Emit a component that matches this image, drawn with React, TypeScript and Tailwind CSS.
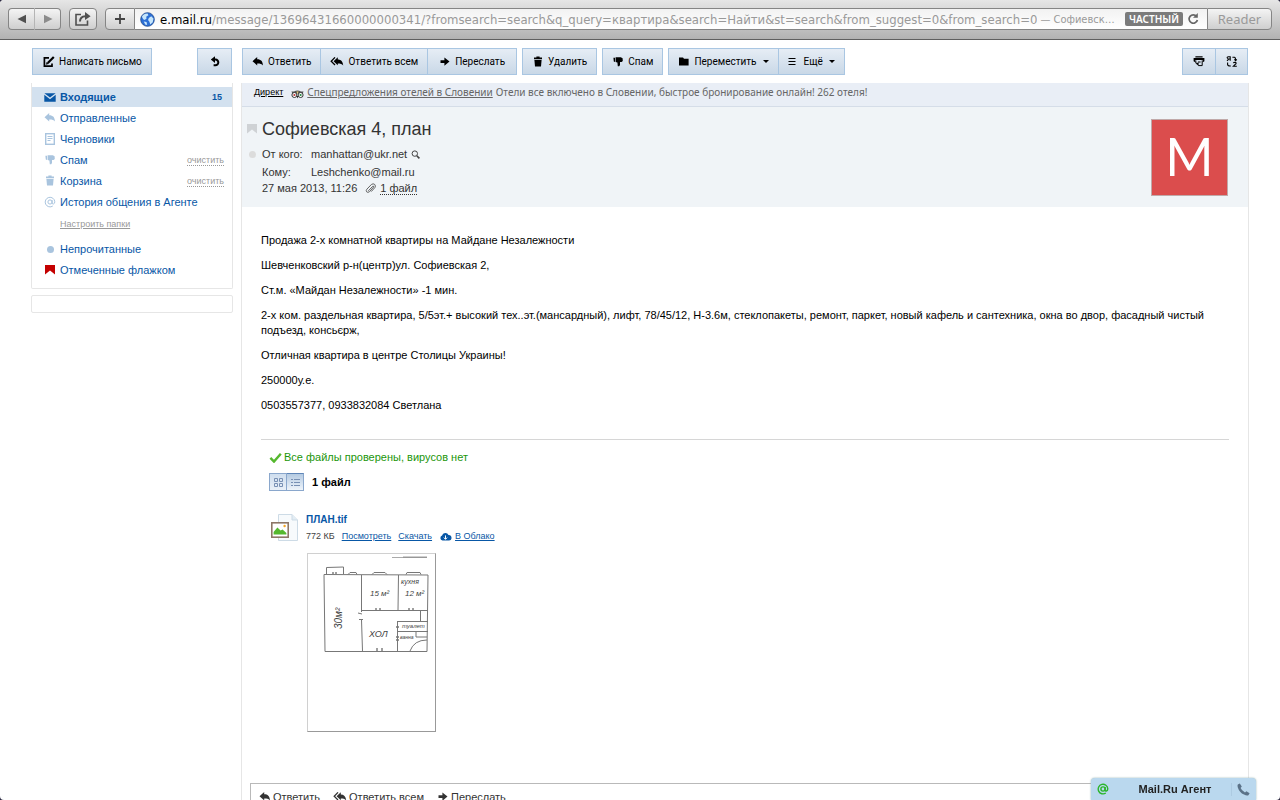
import { useState } from "react";
import type { ReactNode } from "react";
import clsx from "clsx";

type IconProps = { className?: string };

const ReplyIcon = ({ className }: IconProps) => (
  <svg viewBox="0 0 12 10" className={clsx("h-[10px] w-[12px] shrink-0 fill-current", className)}>
    <path d="M0.5 4.2 5.2 0V2.2C9 2.2 10.8 4.4 11 8.6 9.8 6.8 8.4 6.4 5.2 6.4V8.4Z" />
  </svg>
);

const ReplyAllIcon = ({ className }: IconProps) => (
  <svg viewBox="0 0 14 10" className={clsx("h-[10px] w-[14px] shrink-0 fill-current", className)}>
    <path d="M3.6 4.2 7.8 0.2V2.4C11 2.4 13 4.4 13.2 8.6 12 6.8 10.4 6.4 7.8 6.4V8.2Z" />
    <path d="M5 0.4 1.2 4.2 5 8" fill="none" stroke="currentColor" strokeWidth="1.3" />
  </svg>
);

const ForwardIcon = ({ className }: IconProps) => (
  <svg viewBox="0 0 12 10" className={clsx("h-[10px] w-[12px] shrink-0 fill-current", className)}>
    <path d="M1.5 3.2H5.4V0.4L10.5 4.6 5.4 8.8V6H1.5Z" />
  </svg>
);

const TrashIcon = ({ className }: IconProps) => (
  <svg viewBox="0 0 12 12" className={clsx("size-[12px] shrink-0 fill-current", className)}>
    <path d="M4.4 0.6H7.6V1.6H10V3.2H2V1.6H4.4ZM2.4 4H9.6L9 10.6H3Z" />
  </svg>
);

const SpamIcon = ({ className }: IconProps) => (
  <svg viewBox="0 0 12 12" className={clsx("h-[12px] w-[12px] shrink-0 fill-current", className)}>
    <path d="M1.4 1.8H3V6L1.8 5.4ZM3.6 1.2H8.8L10.6 2.2 10.8 5 9.6 6H8V9L7.2 10.2H5.8L5.4 6.6 3.6 6Z" />
  </svg>
);

const FolderIcon = () => (
  <svg viewBox="0 0 12 10" className="h-[10px] w-[12px] shrink-0 fill-current">
    <path d="M1 0.6H5L6 1.8H10.6V8.4H1Z" />
  </svg>
);

const ComposeIcon = () => (
  <svg viewBox="0 0 13 12" className="h-[12px] w-[13px] shrink-0" fill="none" stroke="currentColor">
    <path d="M7 1.8H2.4V10.2H10V7.4" strokeWidth="1.7" />
    <path d="M5.8 7 11.8 1" strokeWidth="2.2" />
    <path d="M4.2 8.4 4.8 6.2 6.4 7.8Z" fill="currentColor" strokeWidth="0.4" />
  </svg>
);

const RefreshIcon = () => (
  <svg viewBox="0 0 12 12" className="h-[12px] w-[12px]" fill="none" stroke="currentColor">
    <path d="M4 3.6H6.6A2.8 2.8 0 1 1 6.4 9.2H4.6" strokeWidth="2" />
    <path d="M6 0.2V7L1.8 3.6Z" fill="currentColor" stroke="none" />
  </svg>
);

const PrintIcon = () => (
  <svg viewBox="0 0 12 12" className="h-[12px] w-[12px] fill-current">
    <path d="M2.4 0.2H9.6V1.6H2.4ZM0.6 2H11.4V5.2Q11 6 9.8 6V4H2.2V6Q1 6 0.6 5.2Z" />
    <path d="M2.8 4.4V7L5.4 9.6H9.2V4.4" fill="none" stroke="currentColor" />
    <path d="M5 5.4H7.6V6.6H5ZM3 6.8H5.6V9.6Z" />
  </svg>
);

const TranslateIcon = () => (
  <svg viewBox="0 0 12 12" className="h-[12px] w-[12px]" fill="none" stroke="currentColor" strokeWidth="1.1">
    <path d="M4.2 4.8V0.8H2.4Q1 1 1.2 2 1.4 3 4 3M2.8 3 1 4.8M6.4 1.2H8.4Q9.6 1.4 9.6 4.2M8.4 3.4 9.6 4.6 10.8 3.4M1.6 6.4V8.6Q1.8 10 4.8 10M7.4 7.2Q7.6 6.2 9 6.2 10.4 6.4 10 7.6L7.4 10.2H10.8" />
  </svg>
);

const FlagIcon = ({ className }: IconProps) => (
  <svg viewBox="0 0 10 10" className={clsx("h-[10px] w-[10px] fill-current", className)}>
    <path d="M0 0H10V9.4L5 5.6 0 9.4Z" />
  </svg>
);

const MailIcon = () => (
  <svg viewBox="0 0 12 9" className="h-[9px] w-[12px] fill-[#0857a6]">
    <path d="M0.4 0.3H11.6L6 4.6ZM0.3 1.7 6 6.2 11.7 1.7V8.8H0.3Z" />
  </svg>
);

const DraftIcon = () => (
  <svg viewBox="0 0 10 12" className="h-[12px] w-[10px]" fill="none" stroke="#a9c4de">
    <rect x="0.7" y="0.7" width="8.6" height="10.6" strokeWidth="1.4" />
    <path d="M2.5 3.5H7.5M2.5 5.5H7.5M2.5 7.5H5.5" />
  </svg>
);

const AtIcon = ({ className }: IconProps) => (
  <svg viewBox="0 0 12 12" className={clsx("h-[12px] w-[12px]", className)} fill="none" stroke="currentColor">
    <circle cx="6" cy="6" r="2.1" />
    <path d="M8.1 4V7Q8.3 8.2 9.4 8 10.8 7.6 10.8 5.8A4.8 4.8 0 1 0 8.8 10" />
  </svg>
);

const OwlIcon = () => (
  <svg viewBox="0 0 13 9" className="mt-1 h-[9px] w-[13px] shrink-0">
    <path d="M0.4 1.6 3 1.4Q6.5-0.6 10 1.4L12.6 1.6 11.6 3.6H1.4Z" fill="#555" />
    <circle cx="3.4" cy="5" r="2.5" fill="#fff" stroke="#333" />
    <circle cx="9.6" cy="5" r="2.5" fill="#fff" stroke="#333" />
    <circle cx="3.4" cy="5" r="1.1" fill="#b33" />
    <circle cx="9.6" cy="5" r="1.1" fill="#284" />
    <path d="M5.6 6 6.5 8.4 7.4 6Z" fill="#222" />
    <path d="M5.4 1.4H7.6L6.5 4Z" fill="#e8c86a" />
  </svg>
);

const GlobeIcon = () => (
  <svg viewBox="0 0 16 16" className="h-[15px] w-[15px] shrink-0">
    <circle cx="8" cy="8" r="7.3" fill="#2c6fd6" stroke="#1c4687" strokeWidth="0.8" />
    <path d="M2 5Q4 1.6 8 1.6L9 3.4 6.6 5 7 7 5 8.4 3.4 7.6ZM9.4 6.4 12 4.4 14.4 7 13.6 11 11 13.4 10 10.4 8.6 8.6ZM4 10 7 10.6 7.6 13.8 5.6 13.4Z" fill="#c6e6fb" />
  </svg>
);

// Hand-drawn floor plan shown as the attachment preview
const FloorPlan = () => (
  <svg viewBox="0 0 127 177" className="h-[177px] w-[127px]" fill="none" stroke="#777" strokeWidth="1">
    <path d="M84 3.5H119" stroke="#aaa" />
    <path d="M95 3H119" stroke="#777" strokeWidth="0.7" />
    <path d="M16 20.5 120 21 119 97.5 17 97.5Z" />
    <path d="M18.5 20V13.5L35.5 13V20M40 20.5 42 18.5H48L49 20.5M64 20.5 66 18.5H77L79 20.5M98 20.5 99 18.5H112L113 20.5" />
    <path d="M53.5 21V58M53.5 66 54.5 97M90.5 21 90 56M53.5 56.5H120M50 59 54 60M51 65.5H55M112.5 57V67" />
    <path d="M90 67.5H120M89.5 67V97M90 77.5H120M108 78V83H119M102 97Q106 86 119 86" />
    <path d="M25 18V20M28 18V20M68 54V57M72 54V57M101 54V57M105 54V57M69 94V97M74 94V97M88 73H91M88 83H91M88 86H91" strokeWidth="1.4" />
    <g fill="#444" stroke="none" className="font-['Liberation_Sans',sans-serif] italic">
      <text x="62" y="42" fontSize="8">15 м²</text>
      <text x="93" y="30" fontSize="7">кухня</text>
      <text x="97" y="42" fontSize="8">12 м²</text>
      <text x="61" y="83" fontSize="9">ХОЛ</text>
      <text x="94" y="74" fontSize="6">туалет</text>
      <text x="92" y="85" fontSize="5">ванна</text>
      <text transform="translate(34 75) rotate(-90)" fontSize="10">30м²</text>
    </g>
  </svg>
);

type ToolButtonProps = {
  icon?: ReactNode;
  label?: string;
  title?: string;
  menu?: boolean;
  joined?: boolean;
  className?: string;
};

const ToolButton = ({ icon, label, title, menu, joined, className = "px-[9px]" }: ToolButtonProps) => (
  <button
    type="button"
    aria-label={title}
    className={clsx(
      "flex h-[27px] items-center justify-center gap-1 border border-[#a9c6e2] bg-gradient-to-b from-[#e6edf5] to-[#c9d8e7] font-['Roboto',sans-serif] text-[10px] whitespace-nowrap text-black",
      joined && "-ml-px",
      className,
    )}
  >
    {icon}
    {label && <span>{label}</span>}
    {menu && <span className="mb-px ml-[2px] border-x-[3px] border-t-[3px] border-x-transparent border-t-black" />}
  </button>
);

const folders = [
  { label: "Входящие", icon: <MailIcon />, count: 15 },
  { label: "Отправленные", icon: <ReplyIcon className="text-[#a9c4de]" /> },
  { label: "Черновики", icon: <DraftIcon /> },
  { label: "Спам", icon: <SpamIcon className="text-[#a9c4de]" />, clear: true },
  { label: "Корзина", icon: <TrashIcon className="text-[#a9c4de]" />, clear: true },
  { label: "История общения в Агенте", icon: <AtIcon className="text-[#a9c4de]" /> },
];

const filters = [
  { label: "Непрочитанные", icon: <span className="size-[7px] rounded-full bg-[#a9c4de]" /> },
  { label: "Отмеченные флажком", icon: <FlagIcon className="text-[#c40000]" /> },
];

const paragraphs = [
  "Продажа 2-х комнатной квартиры на Майдане Незалежности",
  "Шевченковский р-н(центр)ул. Софиевская 2,",
  "Ст.м. «Майдан Незалежности» -1 мин.",
  "2-х ком. раздельная квартира, 5/5эт.+ высокий тех..эт.(мансардный), лифт, 78/45/12, Н-3.6м, стеклопакеты, ремонт, паркет, новый кафель и сантехника, окна во двор, фасадный чистый подъезд, консьєрж,",
  "Отличная квартира в центре Столицы Украины!",
  "250000у.е.",
  "0503557377, 0933832084 Светлана",
];

const chromeButton = "flex h-[22px] items-center justify-center border border-[#858585] bg-gradient-to-b from-[#f4f4f4] to-[#cfcfcf]";

function BrowserBar() {
  const [path, setPath] = useState(
    "/message/13696431660000000341/?fromsearch=search&q_query=квартира&search=Найти&st=search&from_suggest=0&from_search=0",
  );

  return (
    <header className="flex h-10 shrink-0 items-center border-b border-[#5f5f5f] bg-gradient-to-b from-[#e6e6e6] to-[#b2b2b2] px-2 pb-px font-['Noto_Sans',sans-serif]">
      <button type="button" aria-label="Назад" className={clsx(chromeButton, "w-[27px] rounded-l-[4px] border-r-[#b5b5b5]")}>
        <svg viewBox="0 0 10 10" className="size-[10px] fill-[#505050]"><path d="M0.5 5 9 0.8V9.2Z" /></svg>
      </button>
      <button type="button" aria-label="Вперёд" className={clsx(chromeButton, "w-[26px] rounded-r-[4px] border-l-0")}>
        <svg viewBox="0 0 10 10" className="size-[10px] fill-[#8c8c8c]"><path d="M9.5 5 1 0.8V9.2Z" /></svg>
      </button>
      <button type="button" aria-label="Поделиться" className={clsx(chromeButton, "mx-2 w-[28px] rounded-[4px]")}>
        <svg viewBox="0 0 18 16" className="h-[16px] w-[18px]" fill="none" stroke="#505050" strokeWidth="1.6">
          <path d="M7 3.5H2V14H13.5V9.5" />
          <path d="M6 10.5Q6 5.4 11.4 5.2" strokeWidth="2" />
          <path d="M11 1 16.6 5.2 11 9Z" fill="#505050" stroke="none" />
        </svg>
      </button>
      <button type="button" aria-label="Добавить закладку" className={clsx(chromeButton, "w-[30px] rounded-l-[4px]")}>
        <svg viewBox="0 0 12 12" className="size-[12px]" stroke="#444" strokeWidth="1.8"><path d="M6 1V11M1 6H11" /></svg>
      </button>
      <div className="flex h-[22px] min-w-0 flex-1 items-center overflow-hidden border-y border-[#858585] bg-gradient-to-b from-[#f2f2f2] to-white pr-2 pl-[5px] font-['DejaVu_Sans_Condensed','DejaVu_Sans',sans-serif] text-[13px]">
        <GlobeIcon />
        <span className="ml-[5px] text-black">e.mail.ru</span>
        <input
          aria-label="Адрес"
          value={path}
          onChange={(e) => setPath(e.target.value)}
          className="[field-sizing:content] text-[#999] outline-none"
        />
        <span className="ml-[3px] flex-1 text-[11px] whitespace-nowrap text-[#999]">— Софиевск…</span>
        <span className="mr-1 flex h-[14px] shrink-0 items-center rounded-[2px] bg-[#7b7b7b] px-1 font-['Noto_Sans',sans-serif] text-[10px] font-semibold text-white">ЧАСТНЫЙ</span>
        <button type="button" aria-label="Обновить">
          <svg viewBox="0 0 12 12" className="size-[12px]" fill="none" stroke="#666" strokeWidth="1.7">
            <path d="M9.6 3.4A4.2 4.2 0 1 0 10.4 7" />
            <path d="M10.8 0V4.8H6Z" fill="#666" stroke="none" />
          </svg>
        </button>
      </div>
      <button type="button" className={clsx(chromeButton, "w-[65px] rounded-r-[4px] text-[13px] text-[#9a9a9a]")}>Reader</button>
    </header>
  );
}

function Sidebar() {
  const row = "flex h-5 items-center pr-2 pl-[12px]";

  return (
    <aside className="w-[202px] shrink-0">
      <div className="flex justify-between px-px">
        <ToolButton icon={<ComposeIcon />} label="Написать письмо" />
        <ToolButton icon={<RefreshIcon />} title="Обновить" className="w-[35px]" />
      </div>
      <nav className="mt-2 rounded-b-[2px] border border-t-0 border-[#e6e6e6] pt-1 pb-2 text-[#0857a6]">
        <ul className="flex flex-col gap-px">
          {folders.map((f) => (
            <li key={f.label} className={clsx(row, f.count && "bg-[#d3e1ef] font-bold")}>
              <span className="mr-1 flex w-[12px] justify-center">{f.icon}</span>
              <a href="#" className="flex-1">{f.label}</a>
              {f.count && <span className="pr-[2px] text-[9px]">{f.count}</span>}
              {f.clear && (
                <button type="button" className="border-b border-dotted border-[#999] text-[9px] leading-[10px] text-[#999]">очистить</button>
              )}
            </li>
          ))}
        </ul>
        <a href="#" className="mt-[6px] mb-[9px] ml-7 block text-[9px] leading-[12px] text-[#999] underline">Настроить папки</a>
        <ul className="flex flex-col gap-px">
          {filters.map((f) => (
            <li key={f.label} className={row}>
              <span className="mr-1 flex w-[12px] justify-center">{f.icon}</span>
              <a href="#">{f.label}</a>
            </li>
          ))}
        </ul>
      </nav>
      <div className="mt-[6px] h-[18px] rounded-[2px] border border-[#e6e6e6]" />
    </aside>
  );
}

function Toolbar() {
  return (
    <div className="flex items-center justify-between px-px">
      <div className="flex gap-[5px]">
        <div className="flex">
          <ToolButton icon={<ReplyIcon />} label="Ответить" />
          <ToolButton joined icon={<ReplyAllIcon />} label="Ответить всем" />
          <ToolButton joined icon={<ForwardIcon />} label="Переслать" className="px-[11px]" />
        </div>
        <ToolButton icon={<TrashIcon />} label="Удалить" />
        <ToolButton icon={<SpamIcon />} label="Спам" />
        <div className="flex">
          <ToolButton icon={<FolderIcon />} label="Переместить" menu />
          <ToolButton
            joined
            icon={
              <svg viewBox="0 0 8 8" className="mr-1 size-2" stroke="currentColor"><path d="M0.5 0.5H7.5M0.5 3.5H7.5M0.5 6.5H7.5" /></svg>
            }
            label="Ещё"
            menu
          />
        </div>
      </div>
      <div className="flex">
        <ToolButton icon={<PrintIcon />} title="Распечатать" className="w-[34px]" />
        <ToolButton joined icon={<TranslateIcon />} title="Перевести" className="w-[33px]" />
      </div>
    </div>
  );
}

function MessageHeader() {
  return (
    <div className="flex h-[100px] justify-between bg-[#f0f4f7] pt-3 pr-5 pl-[5px] text-[#333]">
      <div>
        <div className="flex items-center">
          <FlagIcon className="mr-[5px] text-[#cfd2d5]" />
          <h1 className="text-[18px] leading-[20px]">Софиевская 4, план</h1>
        </div>
        <div className="mt-[6px] flex h-[18px] items-center">
          <span className="mr-[6px] ml-[2px] size-[7px] rounded-full bg-[#dcdcdc]" />
          <span className="w-[49px]">От кого:</span>
          <span>manhattan@ukr.net</span>
          <svg viewBox="0 0 9 9" className="ml-1 size-[9px]" fill="none" stroke="#444"><circle cx="3.8" cy="3.6" r="2.7" /><path d="M5.8 5.8 8.4 8.4" strokeWidth="1.6" /></svg>
        </div>
        <div className="flex h-[18px] items-center pl-[15px]">
          <span className="w-[49px]">Кому:</span>
          <span>Leshchenko@mail.ru</span>
        </div>
        <div className="flex h-[14px] items-center pl-[15px]">
          <span>27 мая 2013, 11:26</span>
          <svg viewBox="0 0 12 12" className="mr-1 ml-2 size-[11px]" fill="none" stroke="#555"><path d="M3.6 8.6 8.4 3.6Q9.6 3 9.4 4.4L5 9.4Q3 11 1.8 9.6 0.8 8.2 2 6.8L7 1.6Q9 0.2 10.6 1.6 12 3.2 10.8 5L6.8 9.4" /></svg>
          <a href="#files" className="border-b border-dotted border-[#333] leading-[12px]">1 файл</a>
        </div>
      </div>
      <div className="flex size-[77px] items-center justify-center border border-[#c0a9a9] bg-[#db4d4d] pb-1 font-['Lato',sans-serif] text-[52px] leading-none text-white">M</div>
    </div>
  );
}

function Attachments() {
  const link = "text-[9px] text-[#0857a6] underline";

  return (
    <section id="files" className="mt-[26px] border-t border-[#d6d6d6] px-2 pt-[10px]">
      <p className="flex h-[14px] items-center text-[#1c960a]">
        <svg viewBox="0 0 13 11" className="mr-[2px] h-[11px] w-[13px]" fill="none" stroke="#55b82e" strokeWidth="2.4"><path d="M1.4 5.8 5 9.6 11.8 1.8" /></svg>
        Все файлы проверены, вирусов нет
      </p>
      <div className="mt-[9px] flex h-[18px] items-center">
        <div className="flex">
          <button type="button" aria-label="Значки" className="flex h-[18px] w-[18px] items-center justify-center border border-[#8aa7cc] bg-gradient-to-b from-[#cfdeee] to-[#e9f0f8]">
            <svg viewBox="0 0 9 9" className="size-[9px]" fill="none" stroke="#7890b4"><path d="M0.5 0.5H3.5V3.5H0.5ZM5.5 0.5H8.5V3.5H5.5ZM0.5 5.5H3.5V8.5H0.5ZM5.5 5.5H8.5V8.5H5.5Z" /></svg>
          </button>
          <button type="button" aria-label="Список" className="flex h-[18px] w-[17px] items-center justify-center border border-l-0 border-[#8aa7cc] border-t-[#5f86b8] bg-gradient-to-b from-[#b4cae2] to-[#eef4fa]">
            <svg viewBox="0 0 9 9" className="size-[9px]" stroke="#7890b4"><path d="M0 1.5H2M3 1.5H9M0 4.5H2M3 4.5H9M0 7.5H2M3 7.5H9" /></svg>
          </button>
        </div>
        <b className="ml-2 text-black">1 файл</b>
      </div>
      <div className="mt-[22px] flex">
        <svg viewBox="0 0 29 30" className="mr-2 h-[30px] w-[29px]">
          <path d="M9.5 1.5H23L28.5 7V27.5H9.5Z" fill="#f7fafc" stroke="#cddbe6" />
          <path d="M23 1.5V7H28.5" fill="#e3edf4" stroke="#cddbe6" />
          <rect x="2.8" y="9.8" width="16.4" height="14.4" fill="#fff" stroke="#8d7767" strokeWidth="1.6" />
          <path d="M4.6 21.5V19L8.4 14.4 11.6 17.6 13.6 16.4 17.4 20V21.5Z" fill="#55b82e" />
          <circle cx="15.6" cy="13" r="1.2" fill="#f5a623" />
        </svg>
        <div>
          <a href="#" className="block text-[10px] leading-[14px] font-bold text-[#0857a6]">ПЛАН.tif</a>
          <div className="flex h-[18px] items-center gap-[7px]">
            <span className="text-[9px] text-[#444]">772 КБ</span>
            <a href="#" className={link}>Посмотреть</a>
            <a href="#" className={link}>Скачать</a>
            <span className="flex items-center gap-[3px]">
              <svg viewBox="0 0 12 9" className="h-[9px] w-[13px]"><path d="M3 8.6A2.6 2.6 0 0 1 2.6 3.6 3.4 3.4 0 0 1 9 3 2.8 2.8 0 0 1 9.4 8.6Z" fill="#0857a6" /><path d="M6 3.4V7M4.4 5.6 6 7.4 7.6 5.6" fill="none" stroke="#fff" /></svg>
              <a href="#" className={link}>В Облако</a>
            </span>
          </div>
          <a href="#" aria-label="ПЛАН.tif" className="mt-2 ml-px block w-[129px] border border-[#d0d0d0] border-r-[#999] border-b-[#999]">
            <FloorPlan />
          </a>
        </div>
      </div>
    </section>
  );
}

function ReplyBar() {
  const action = "flex items-center gap-[2px]";

  return (
    <div className="mx-2 mt-[51px] flex h-7 shrink-0 items-center gap-[13px] border border-[#b9b9b9] px-2 text-[#333]">
      <button type="button" className={action}><ReplyIcon />Ответить</button>
      <button type="button" className={action}><ReplyAllIcon />Ответить всем</button>
      <button type="button" className={action}><ForwardIcon />Переслать</button>
    </div>
  );
}

function AgentBar() {
  return (
    <div className="fixed right-6 bottom-0 flex h-[22px] w-[165px] items-center rounded-t-[4px] bg-[#bad8ee] px-[6px] text-[#222] shadow-[0_0_2px_#8aa]">
      <AtIcon className="text-[#2bb52b] [stroke-width:1.4]" />
      <button type="button" className="flex-1 pl-[10px] text-center text-[11px] font-bold">Mail.Ru Агент</button>
      <button type="button" aria-label="Позвонить" className="border-l border-[#adcbe2] pl-[5px]">
        <svg viewBox="0 0 13 13" className="size-[13px] fill-[#5b7288]"><path d="M0.8 1.6 2.8 0.4 4.8 3.6 3.6 5Q4.8 7.8 8 9.4L9.4 8.2 12.6 10.2 11.4 12.2Q9.8 13 7 11.6 2.4 9.4 0.8 4.4 0.2 2.6 0.8 1.6Z" /></svg>
      </button>
    </div>
  );
}

export default function App() {
  return (
    <div className="h-screen bg-[#2b2840] font-['Liberation_Sans',Arial,sans-serif] text-[11px] leading-[15px]">
      <div className="flex h-full flex-col overflow-hidden rounded-[4px] bg-white">
        <BrowserBar />
        <div className="flex min-h-0 flex-1 gap-2 overflow-hidden pt-2 pr-[31px] pl-[31px]">
          <Sidebar />
          <main className="min-w-0 flex-1">
            <Toolbar />
            <div className="mt-2 min-h-full border-x border-[#e6e6e6]">
              <div className="flex h-6 items-center border-b border-[#d5dde8] bg-[#e9eef6] px-3 pb-1 font-['Noto_Sans',sans-serif] text-[10px] text-[#666]">
                <a href="#" className="mr-2 font-['Liberation_Sans',sans-serif] text-[9px] text-black underline">Директ</a>
                <OwlIcon />
                <a href="#" className="mr-[3px] ml-[3px] underline">Спецпредложения отелей в Словении</a>
                <span>Отели все включено в Словении, быстрое бронирование онлайн! 262 отеля!</span>
              </div>
              <MessageHeader />
              <article className="mx-[19px] pt-[26px] text-black">
                <div className="flex flex-col gap-[10px]">
                  {paragraphs.map((text) => (
                    <p key={text}>{text}</p>
                  ))}
                </div>
                <Attachments />
              </article>
              <ReplyBar />
            </div>
          </main>
        </div>
      </div>
      <AgentBar />
    </div>
  );
}
